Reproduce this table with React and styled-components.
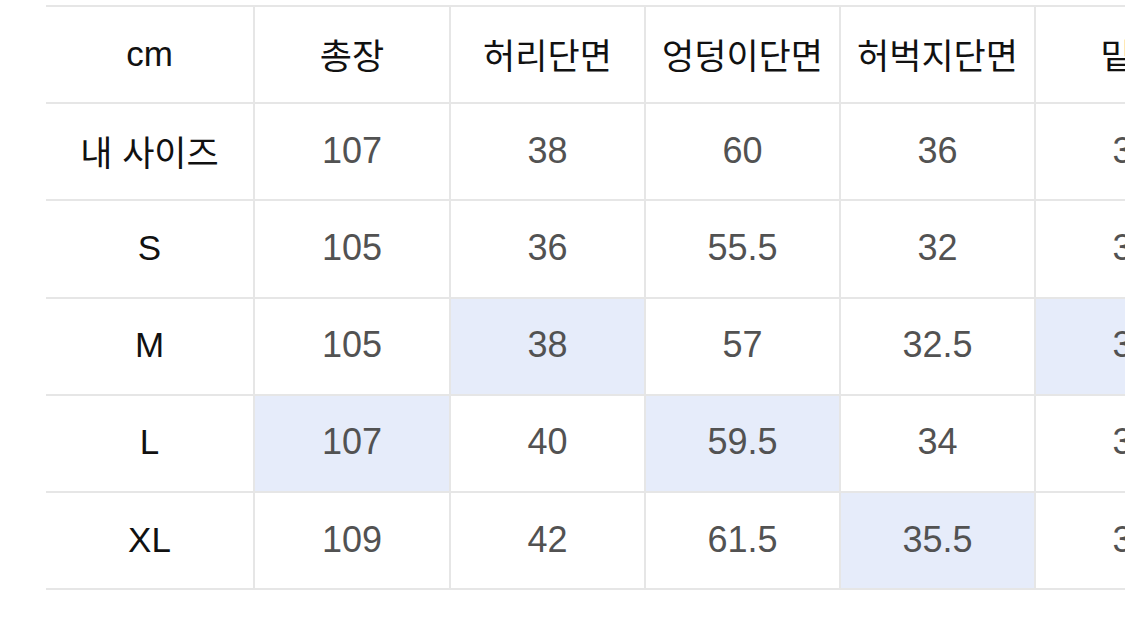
import React from 'react';
import styled, { createGlobalStyle } from 'styled-components';

const GlobalStyle = createGlobalStyle`
  html, body {
    margin: 0;
    padding: 0;
    background: #ffffff;
  }
  body {
    font-family: "Liberation Sans", "Noto Sans CJK KR", sans-serif;
    overflow: hidden;
  }
`;

const Page = styled.div`
  width: 1125px;
  height: 630px;
  overflow: hidden;
  padding: 5px 0 0 46px;
  box-sizing: border-box;
`;

const Grid = styled.div`
  display: grid;
  grid-template-columns: 207px 196px repeat(5, 195px);
  border-top: 2px solid #e6e6e6;
  width: max-content;
`;

const Cell = styled.div`
  box-sizing: border-box;
  height: 97.2px;
  display: flex;
  align-items: center;
  justify-content: center;
  border-bottom: 2px solid #e6e6e6;
  border-left: ${(p) => (p.$first ? 'none' : '2px solid #e6e6e6')};
  background: ${(p) => (p.$hit ? '#e6ecfa' : '#ffffff')};
  color: ${(p) => (p.$label ? '#111111' : '#525252')};
  font-size: ${(p) => (p.$label ? '35px' : '36px')};
  white-space: nowrap;
  padding-bottom: 2px;
`;

const headers = ['cm', '총장', '허리단면', '엉덩이단면', '허벅지단면', '밑위', '밑단단면'];

const rows = [
  { label: '내 사이즈', values: ['107', '38', '60', '36', '32', '24'], hit: [] },
  { label: 'S', values: ['105', '36', '55.5', '32', '31', '23'], hit: [] },
  { label: 'M', values: ['105', '38', '57', '32.5', '32', '24'], hit: [1, 4] },
  { label: 'L', values: ['107', '40', '59.5', '34', '33', '25'], hit: [0, 2] },
  { label: 'XL', values: ['109', '42', '61.5', '35.5', '34', '26'], hit: [3] },
];

export default function App() {
  return (
    <>
      <GlobalStyle />
      <Page>
        <Grid>
          {headers.map((h, i) => (
            <Cell key={h} $label $first={i === 0}>
              {h}
            </Cell>
          ))}
          {rows.map((row) => (
            <React.Fragment key={row.label}>
              <Cell $label $first>
                {row.label}
              </Cell>
              {row.values.map((v, i) => (
                <Cell key={i} $hit={row.hit.includes(i)}>
                  {v}
                </Cell>
              ))}
            </React.Fragment>
          ))}
        </Grid>
      </Page>
    </>
  );
}
